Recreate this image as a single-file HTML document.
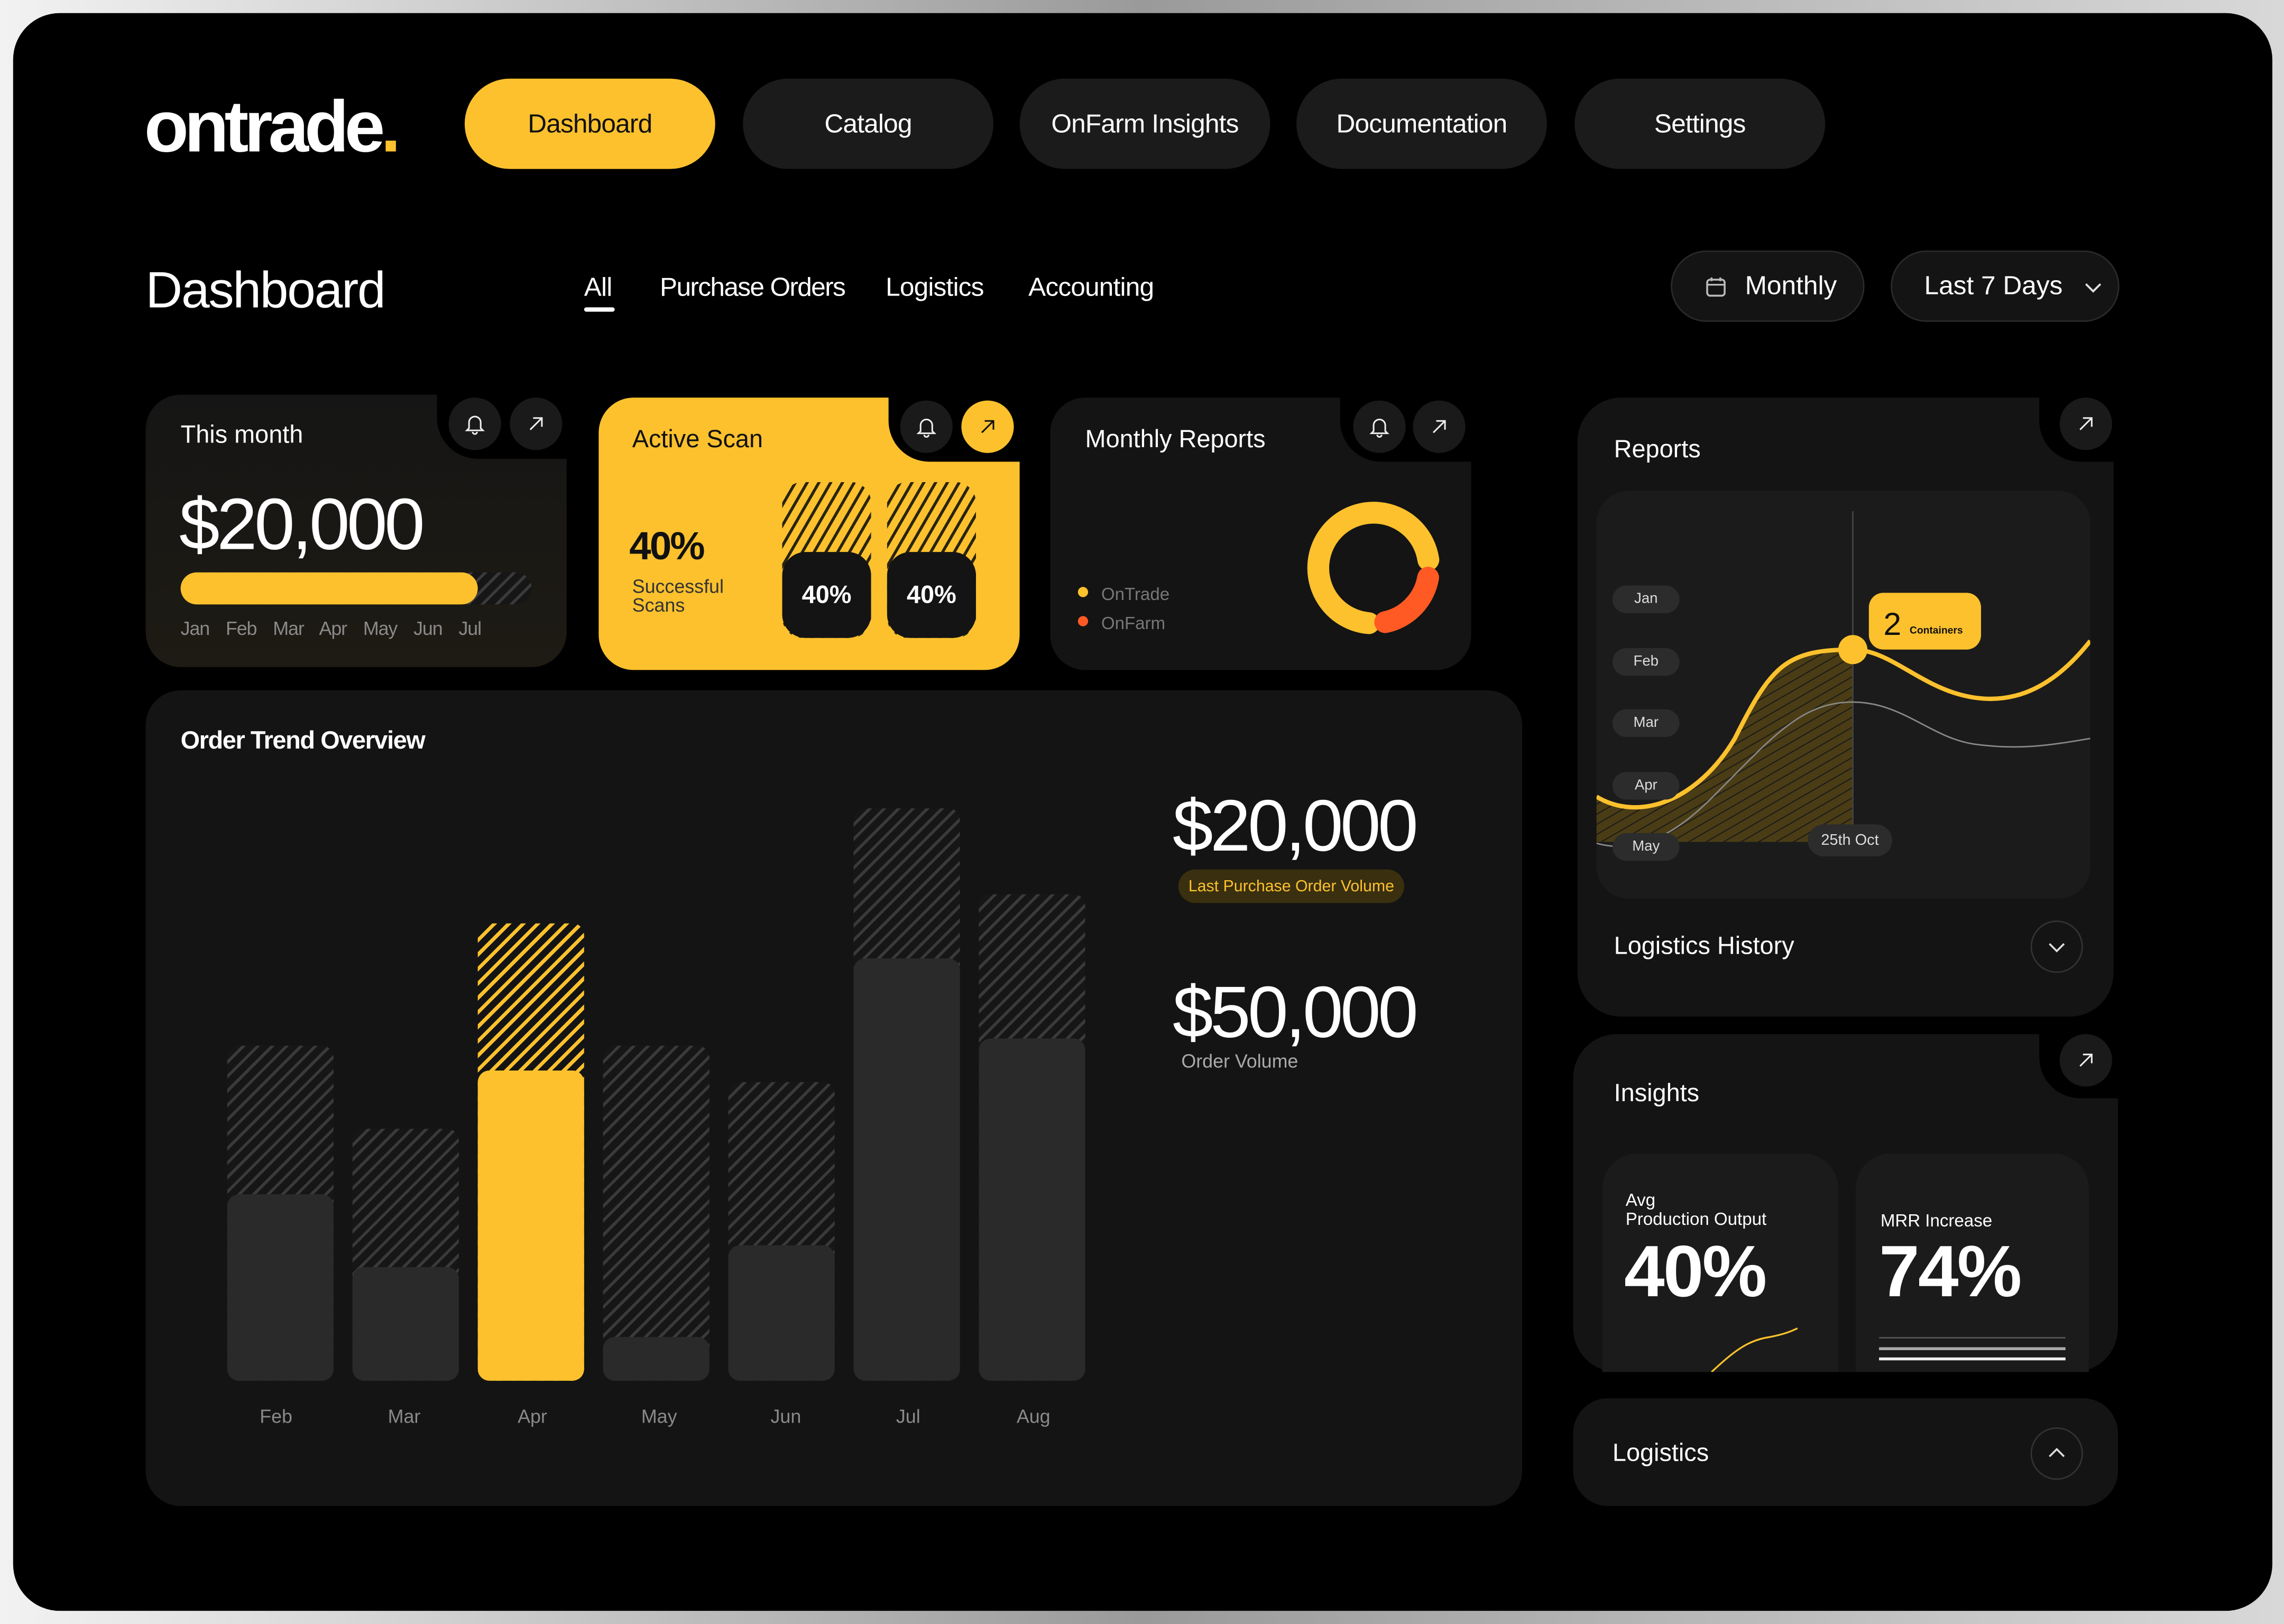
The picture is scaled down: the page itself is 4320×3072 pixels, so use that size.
<!DOCTYPE html>
<html><head><meta charset="utf-8">
<style>
*{margin:0;padding:0;box-sizing:border-box}
html,body{width:4320px;height:3072px;overflow:hidden}
body{background:linear-gradient(90deg,#f2f2f2 0%,#9a9a9a 50%,#d8d8d8 100%);font-family:"Liberation Sans",sans-serif;color:#fff}
#s{position:absolute;left:0;top:0;width:1568px;height:1115px;transform:scale(2.7551);transform-origin:0 0}
.a{position:absolute}
#frame{left:9px;top:9px;width:1551px;height:1097px;background:#000;border-radius:32px}
.pill{position:absolute;top:54px;height:62px;width:172px;border-radius:31px;background:#1b1b1b;font-size:18px;display:flex;align-items:center;justify-content:center;letter-spacing:-0.3px}
.tab{position:absolute;top:187px;font-size:18px;letter-spacing:-0.3px}
.card{position:absolute;background:#141414;border-radius:24px}
.notch{position:absolute;background:#000;border-bottom-left-radius:26px}
.ib{position:absolute;width:36px;height:36px;border-radius:18px;background:#1a1a1a;display:flex;align-items:center;justify-content:center}
.hat{background:repeating-linear-gradient(135deg,#3a3a3a 0 2px,#161616 2px 7px)}
.haty{background:repeating-linear-gradient(135deg,#fcc12d 0 2.5px,#141414 2.5px 7px)}
.bar{position:absolute;width:73px;border-radius:8px}
.sol{position:absolute;width:73px;border-radius:8px;background:#2a2a2a}
.lbl{position:absolute;top:965px;font-size:13px;color:#8a8a8a;width:73px;text-align:center}
.chip{position:absolute;left:1107px;width:46px;height:19px;border-radius:10px;background:#2c2c2c;font-size:10px;display:flex;align-items:center;justify-content:center;color:#ddd}
</style></head><body>
<div id="s">
<div id="frame" class="a"></div>

<div class="a" style="left:99px;top:58px;font-size:50px;font-weight:bold;letter-spacing:-3px">ontrade<span style="color:#fcc12d">.</span></div>
<div class="pill" style="left:319px;background:#fcc12d;color:#111">Dashboard</div>
<div class="pill" style="left:510px">Catalog</div>
<div class="pill" style="left:700px">OnFarm Insights</div>
<div class="pill" style="left:890px">Documentation</div>
<div class="pill" style="left:1081px">Settings</div>

<div class="a" style="left:100px;top:180px;font-size:35px;letter-spacing:-0.8px">Dashboard</div>
<div class="tab" style="left:401px">All</div>
<div class="a" style="left:401px;top:211px;width:21px;height:3px;border-radius:2px;background:#fff"></div>
<div class="tab" style="left:453px;letter-spacing:-0.6px">Purchase Orders</div>
<div class="tab" style="left:608px">Logistics</div>
<div class="tab" style="left:706px">Accounting</div>

<div class="a" style="left:1147px;top:172px;width:133px;height:49px;border-radius:25px;background:#141414;border:1px solid #2a2a2a;font-size:18px;display:flex;align-items:center;padding-left:22px">
<svg width="16" height="16" viewBox="0 0 16 16" style="margin-right:12px"><rect x="2" y="3" width="12" height="11" rx="2" fill="none" stroke="#bbb" stroke-width="1.3"/><line x1="2" y1="6.5" x2="14" y2="6.5" stroke="#bbb" stroke-width="1.2"/><line x1="5" y1="1.5" x2="5" y2="4" stroke="#bbb" stroke-width="1.3"/><line x1="11" y1="1.5" x2="11" y2="4" stroke="#bbb" stroke-width="1.3"/></svg>Monthly</div>
<div class="a" style="left:1298px;top:172px;width:157px;height:49px;border-radius:25px;background:#141414;border:1px solid #2a2a2a;font-size:18px;display:flex;align-items:center;padding-left:22px">Last 7 Days
<svg width="14" height="10" viewBox="0 0 14 10" style="margin-left:14px"><path d="M2 3l5 5 5-5" fill="none" stroke="#ddd" stroke-width="1.4"/></svg></div>

<!-- card1 -->
<div class="card" style="left:100px;top:271px;width:289px;height:187px;background:linear-gradient(180deg,#151515,#1e1b14)"></div>
<div class="notch" style="left:300px;top:265px;width:95px;height:50px;border-bottom-left-radius:28px"></div>
<div class="ib" style="left:308px;top:273px"><svg width="14" height="16" viewBox="0 0 14 16"><path d="M3 11V7a4 4 0 018 0v4l1.5 1.5h-11z M5.5 13.5a1.5 1.5 0 003 0" fill="none" stroke="#eee" stroke-width="1.1"/></svg></div>
<div class="ib" style="left:350px;top:273px"><svg width="12" height="12" viewBox="0 0 12 12"><path d="M2 10L10 2M4 2h6v6" fill="none" stroke="#eee" stroke-width="1.1"/></svg></div>
<div class="a" style="left:124px;top:289px;font-size:17px">This month</div>
<div class="a" style="left:123px;top:332px;font-size:50px;letter-spacing:-2px;line-height:56px">$20,000</div>
<div class="a hat" style="left:124px;top:393px;width:241px;height:22px;border-radius:11px"></div>
<div class="a" style="left:124px;top:393px;width:204px;height:22px;border-radius:11px;background:#fcc12d"></div>
<div class="a" style="left:124px;top:424px;font-size:13px;color:#8a8a8a;word-spacing:8px;letter-spacing:-0.4px">Jan Feb Mar Apr May Jun Jul</div>

<!-- card2 -->
<div class="card" style="left:411px;top:273px;width:289px;height:187px;background:#fcc12d"></div>
<div class="notch" style="left:610px;top:267px;width:95px;height:50px;border-bottom-left-radius:28px"></div>
<div class="ib" style="left:618px;top:275px"><svg width="14" height="16" viewBox="0 0 14 16"><path d="M3 11V7a4 4 0 018 0v4l1.5 1.5h-11z M5.5 13.5a1.5 1.5 0 003 0" fill="none" stroke="#eee" stroke-width="1.1"/></svg></div>
<div class="ib" style="left:660px;top:275px;background:#fcc12d"><svg width="12" height="12" viewBox="0 0 12 12"><path d="M2 10L10 2M4 2h6v6" fill="none" stroke="#111" stroke-width="1.1"/></svg></div>
<div class="a" style="left:434px;top:292px;font-size:17px;color:#111">Active Scan</div>
<div class="a" style="left:432px;top:360px;font-size:27px;font-weight:bold;color:#111;letter-spacing:-1px">40%</div>
<div class="a" style="left:434px;top:396px;font-size:13px;color:#333;line-height:13px">Successful<br>Scans</div>
<div class="a" style="left:537px;top:331px;width:61px;height:107px;border-radius:14px;background:repeating-linear-gradient(120deg,#2a2410 0 2px,#fcc12d 2px 7px)"></div>
<div class="a" style="left:609px;top:331px;width:61px;height:107px;border-radius:14px;background:repeating-linear-gradient(120deg,#2a2410 0 2px,#fcc12d 2px 7px)"></div>
<div class="a" style="left:537px;top:379px;width:61px;height:59px;border-radius:16px;background:#141414;font-size:17px;font-weight:bold;display:flex;align-items:center;justify-content:center">40%</div>
<div class="a" style="left:609px;top:379px;width:61px;height:59px;border-radius:16px;background:#141414;font-size:17px;font-weight:bold;display:flex;align-items:center;justify-content:center">40%</div>

<!-- card3 -->
<div class="card" style="left:721px;top:273px;width:289px;height:187px"></div>
<div class="notch" style="left:920px;top:267px;width:95px;height:50px;border-bottom-left-radius:28px"></div>
<div class="ib" style="left:929px;top:275px"><svg width="14" height="16" viewBox="0 0 14 16"><path d="M3 11V7a4 4 0 018 0v4l1.5 1.5h-11z M5.5 13.5a1.5 1.5 0 003 0" fill="none" stroke="#eee" stroke-width="1.1"/></svg></div>
<div class="ib" style="left:970px;top:275px"><svg width="12" height="12" viewBox="0 0 12 12"><path d="M2 10L10 2M4 2h6v6" fill="none" stroke="#eee" stroke-width="1.1"/></svg></div>
<div class="a" style="left:745px;top:292px;font-size:17px">Monthly Reports</div>
<div class="a" style="left:740px;top:403px;width:7px;height:7px;border-radius:4px;background:#fcc12d"></div>
<div class="a" style="left:740px;top:423px;width:7px;height:7px;border-radius:4px;background:#ff5a24"></div>
<div class="a" style="left:756px;top:398px;font-size:12px;color:#777;line-height:20px">OnTrade<br>OnFarm</div>
<svg class="a" style="left:895px;top:342px" width="100" height="100" viewBox="0 0 100 100">
<circle cx="48" cy="48" r="38" fill="none" stroke="#fcc12d" stroke-width="15" stroke-dasharray="170 300" transform="rotate(95 48 48)" stroke-linecap="round"/>
<circle cx="48" cy="48" r="38" fill="none" stroke="#ff5a24" stroke-width="15" stroke-dasharray="45 300" transform="rotate(10 48 48)" stroke-linecap="round"/>
</svg>

<!-- order trend -->
<div class="card" style="left:100px;top:474px;width:945px;height:560px"></div>
<div class="a" style="left:124px;top:499px;font-size:17px;font-weight:bold;letter-spacing:-0.5px">Order Trend Overview</div>
<div class="bar hat" style="left:156px;top:718px;height:230px"></div><div class="sol" style="left:156px;top:820px;height:128px"></div>
<div class="bar hat" style="left:242px;top:775px;height:173px"></div><div class="sol" style="left:242px;top:870px;height:78px"></div>
<div class="bar haty" style="left:328px;top:634px;height:314px"></div><div class="sol" style="left:328px;top:735px;height:213px;background:#fcc12d"></div>
<div class="bar hat" style="left:414px;top:718px;height:230px"></div><div class="sol" style="left:414px;top:918px;height:30px"></div>
<div class="bar hat" style="left:500px;top:743px;height:205px"></div><div class="sol" style="left:500px;top:855px;height:93px"></div>
<div class="bar hat" style="left:586px;top:555px;height:393px"></div><div class="sol" style="left:586px;top:658px;height:290px"></div>
<div class="bar hat" style="left:672px;top:614px;height:334px"></div><div class="sol" style="left:672px;top:713px;height:235px"></div>
<div class="lbl" style="left:153px">Feb</div><div class="lbl" style="left:241px">Mar</div><div class="lbl" style="left:329px">Apr</div><div class="lbl" style="left:416px">May</div><div class="lbl" style="left:503px">Jun</div><div class="lbl" style="left:587px">Jul</div><div class="lbl" style="left:673px">Aug</div>
<div class="a" style="left:805px;top:538px;font-size:50px;letter-spacing:-2px">$20,000</div>
<div class="a" style="left:809px;top:597px;width:155px;height:23px;border-radius:12px;background:#3a300f;color:#fcc12d;font-size:11px;display:flex;align-items:center;justify-content:center">Last Purchase Order Volume</div>
<div class="a" style="left:805px;top:666px;font-size:50px;letter-spacing:-2px">$50,000</div>
<div class="a" style="left:811px;top:721px;font-size:13px;color:#aaa">Order Volume</div>

<!-- reports -->
<div class="card" style="left:1083px;top:273px;width:368px;height:425px;border-radius:30px"></div>
<div class="notch" style="left:1400px;top:267px;width:60px;height:50px;border-bottom-left-radius:28px"></div>
<div class="ib" style="left:1414px;top:273px"><svg width="12" height="12" viewBox="0 0 12 12"><path d="M2 10L10 2M4 2h6v6" fill="none" stroke="#eee" stroke-width="1.1"/></svg></div>
<div class="a" style="left:1108px;top:299px;font-size:17px">Reports</div>
<div class="a" style="left:1096px;top:337px;width:339px;height:280px;border-radius:22px;background:#1b1b1b;overflow:hidden">
<svg width="339" height="280" viewBox="0 0 339 280">
<defs><pattern id="p" width="6" height="6" patternUnits="userSpaceOnUse" patternTransform="rotate(-30)"><rect width="6" height="6" fill="#4a3c14"/><line x1="0" y1="0" x2="6" y2="0" stroke="#1b1b1b" stroke-width="1.5"/></pattern></defs>
<path d="M0 210 C30 230 70 210 95 170 C120 120 130 110 176 109 L176 241 L0 241Z" fill="url(#p)"/>
<line x1="176" y1="14" x2="176" y2="243" stroke="#444" stroke-width="1"/>
<path d="M0 242 C30 250 55 235 80 210 C120 170 140 145 176 145 C210 145 230 170 260 174 C290 178 310 175 339 170" fill="none" stroke="#888" stroke-width="1"/>
<path d="M0 210 C30 228 70 212 95 170 C120 120 130 109 176 109 C200 109 220 132 250 140 C280 148 310 140 339 103" fill="none" stroke="#fcc12d" stroke-width="3"/>
<circle cx="176" cy="109" r="10" fill="#fcc12d"/>
<rect x="187" y="70" width="77" height="39" rx="10" fill="#fcc12d"/>
<text x="197" y="99" font-size="22" fill="#111" font-family="Liberation Sans">2</text>
<text x="215" y="98" font-size="7" font-weight="bold" fill="#111" font-family="Liberation Sans">Containers</text>
<rect x="145" y="229" width="58" height="22" rx="11" fill="#2c2c2c"/>
<text x="174" y="243" font-size="10.5" fill="#ddd" text-anchor="middle" font-family="Liberation Sans">25th Oct</text>
</svg></div>
<div class="chip" style="top:402px">Jan</div>
<div class="chip" style="top:445px">Feb</div>
<div class="chip" style="top:487px">Mar</div>
<div class="chip" style="top:530px">Apr</div>
<div class="chip" style="top:572px">May</div>
<div class="a" style="left:1108px;top:640px;font-size:17px">Logistics History</div>
<div class="a" style="left:1394px;top:632px;width:36px;height:36px;border-radius:18px;border:1px solid #333;display:flex;align-items:center;justify-content:center"><svg width="14" height="10" viewBox="0 0 14 10"><path d="M2 3l5 5 5-5" fill="none" stroke="#ddd" stroke-width="1.3"/></svg></div>

<!-- insights -->
<div class="card" style="left:1080px;top:710px;width:374px;height:232px;border-radius:30px"></div>
<div class="notch" style="left:1400px;top:704px;width:60px;height:50px;border-bottom-left-radius:28px"></div>
<div class="ib" style="left:1414px;top:710px"><svg width="12" height="12" viewBox="0 0 12 12"><path d="M2 10L10 2M4 2h6v6" fill="none" stroke="#eee" stroke-width="1.1"/></svg></div>
<div class="a" style="left:1108px;top:741px;font-size:17px">Insights</div>
<div class="a" style="left:1100px;top:792px;width:162px;height:150px;border-radius:24px 24px 0 0;background:#1b1b1b;overflow:hidden">
<div class="a" style="left:16px;top:26px;font-size:12px;line-height:13px">Avg<br>Production Output</div>
<div class="a" style="left:15px;top:52px;font-size:50px;font-weight:bold;letter-spacing:-1px">40%</div>
<svg class="a" style="left:70px;top:118px" width="70" height="32"><path d="M5 32 C20 18 30 10 45 8 C55 6 60 4 64 2" fill="none" stroke="#fcc12d" stroke-width="1.2"/></svg></div>
<div class="a" style="left:1274px;top:792px;width:160px;height:150px;border-radius:24px 24px 0 0;background:#1b1b1b;overflow:hidden">
<div class="a" style="left:17px;top:39px;font-size:12px">MRR Increase</div>
<div class="a" style="left:16px;top:52px;font-size:50px;font-weight:bold;letter-spacing:-1px">74%</div>
<div class="a" style="left:16px;top:126px;width:128px;height:1px;background:#555"></div>
<div class="a" style="left:16px;top:133px;width:128px;height:2px;background:#aaa"></div>
<div class="a" style="left:16px;top:140px;width:128px;height:2px;background:#eee"></div></div>

<div class="card" style="left:1080px;top:960px;width:374px;height:74px"></div>
<div class="a" style="left:1107px;top:988px;font-size:17px">Logistics</div>
<div class="a" style="left:1394px;top:980px;width:36px;height:36px;border-radius:18px;border:1px solid #333;display:flex;align-items:center;justify-content:center"><svg width="14" height="10" viewBox="0 0 14 10"><path d="M2 7l5-5 5 5" fill="none" stroke="#ddd" stroke-width="1.3"/></svg></div>
</div>
</body></html>
